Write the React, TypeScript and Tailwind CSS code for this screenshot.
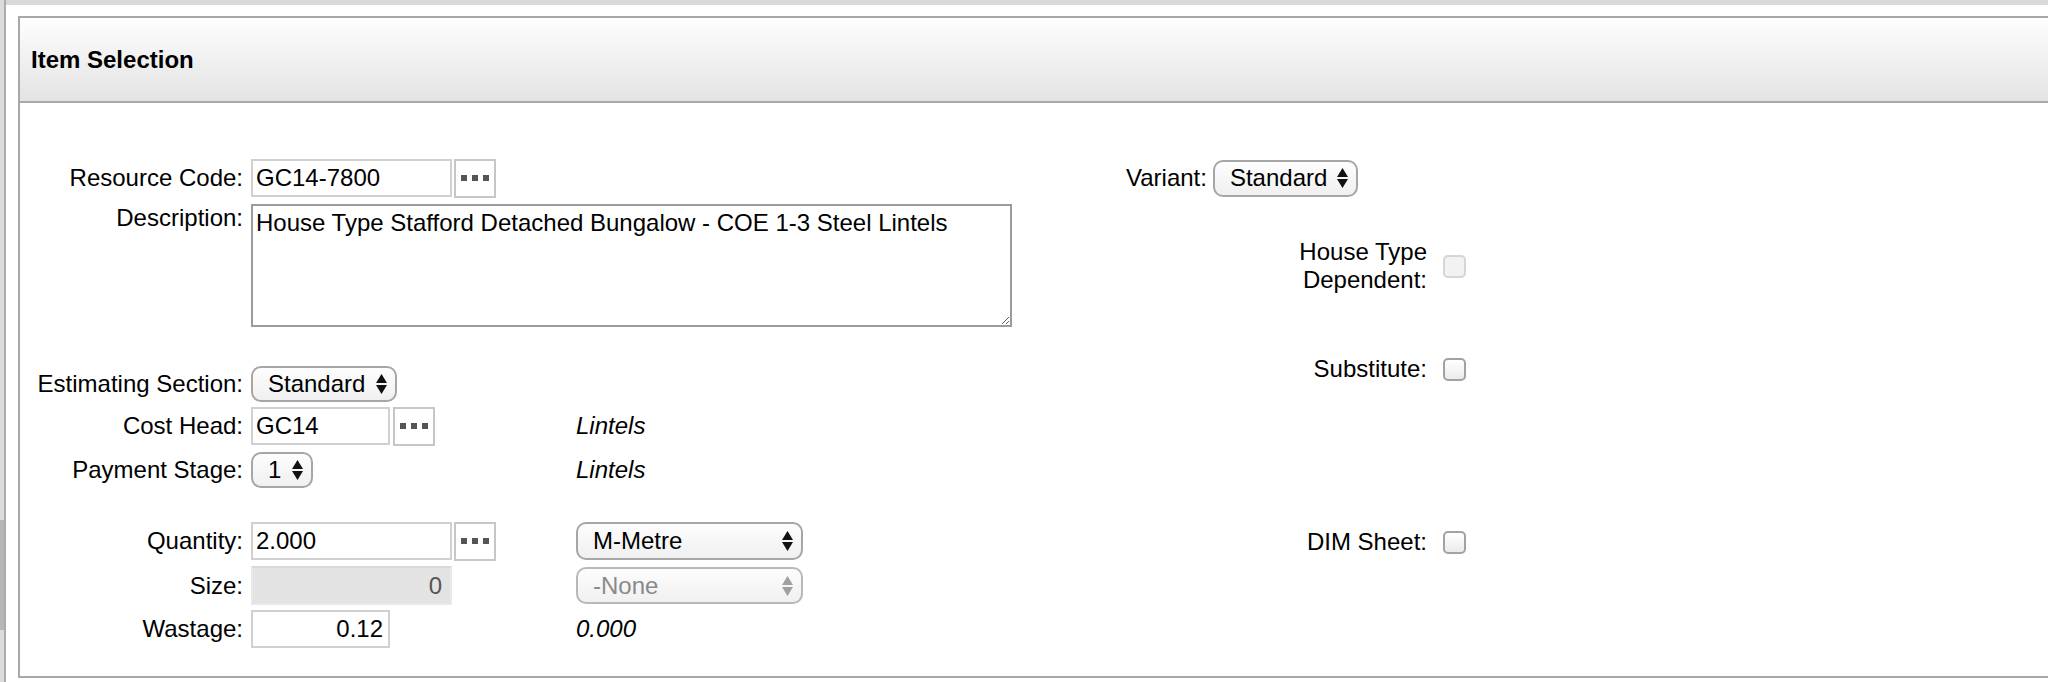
import React from "react";

function Arrows({ muted = false }: { muted?: boolean }) {
    const c = muted ? "#a0a0a0" : "#111111";
    return (
        <svg width="11" height="20" viewBox="0 0 11 20" className="shrink-0">
            <path d="M5.5 0 L11 9 L0 9 Z" fill={c} />
            <path d="M0 11 L11 11 L5.5 20 Z" fill={c} />
        </svg>
    );
}

function Select({ value, className = "", muted = false }: { value: string; className?: string; muted?: boolean }) {
    return (
        <div
            className={`flex shrink-0 items-center justify-between rounded-[10px] border-2 bg-linear-to-b from-[#fdfdfd] to-[#f0f0f0] pl-[15px] pr-[8px] ${
                muted ? "border-[#b8b8b8] text-[#8a8a8a]" : "border-[#a6a6a6] text-black"
            } ${className}`}
        >
            <span>{value}</span>
            <Arrows muted={muted} />
        </div>
    );
}

function Dots({ className = "" }: { className?: string }) {
    return (
        <div className={`flex h-[39px] w-[42px] shrink-0 items-center justify-center gap-[5px] border-2 border-[#c6c6c6] bg-white ${className}`}>
            <span className="h-[6px] w-[6px] bg-[#555]" />
            <span className="h-[6px] w-[6px] bg-[#555]" />
            <span className="h-[6px] w-[6px] bg-[#555]" />
        </div>
    );
}

function Check({ disabled = false }: { disabled?: boolean }) {
    return (
        <span
            className={`ml-4 block h-[23px] w-[23px] shrink-0 rounded-[5px] border-2 ${
                disabled ? "border-[#d6d6d6] bg-[#f2f2f2]" : "border-[#a2a2a2] bg-linear-to-b from-white to-[#ebebeb]"
            }`}
        />
    );
}

function Label({ children, className = "" }: { children: React.ReactNode; className?: string }) {
    return <div className={`w-[223px] shrink-0 text-right leading-[28px] ${className}`}>{children}</div>;
}

export default function App() {
    return (
        <div className="flex h-[682px] w-[2048px] overflow-hidden bg-white text-[24px] text-black font-['Liberation_Sans',Arial,Helvetica,sans-serif]">
            {/* left scroll strip */}
            <div className="flex w-[4px] shrink-0 flex-col bg-[#dcdcdc]">
                <div className="mt-[520px] h-[110px] bg-[#b6b6b6]" />
            </div>
            <div className="w-[2px] shrink-0 bg-[#acacac]" />

            <div className="flex min-w-0 flex-1 flex-col">
                <div className="h-[5px] shrink-0 bg-[#d9d9d9]" />
                <div className="pl-[12px] pt-[11px]">
                    <div className="border-y-2 border-l-2 border-[#a8a8a8]">
                        <div className="flex h-[85px] items-center border-b-2 border-[#a8a8a8] bg-linear-to-b from-[#fefefe] to-[#e3e3e3] pl-[11px]">
                            <h3 className="font-bold">Item Selection</h3>
                        </div>

                        <div className="flex">
                            {/* left table */}
                            <div className="w-[1080px] shrink-0 pt-[56px] pb-[28px]">
                                <div className="flex h-[38px] items-center">
                                    <Label>Resource Code:</Label>
                                    <input readOnly value="GC14-7800" className="ml-2 h-[38px] w-[201px] border-2 border-[#d0d0d0] px-[3px] outline-none" />
                                    <Dots className="ml-[2px]" />
                                </div>

                                <div className="mt-[7px] flex h-[123px] items-start">
                                    <Label>Description:</Label>
                                    <textarea
                                        readOnly
                                        value="House Type Stafford Detached Bungalow - COE 1-3 Steel Lintels"
                                        className="ml-2 h-[123px] w-[761px] resize-y border-2 border-[#9b9b9b] px-[3px] pt-[3px] leading-[28px] outline-none"
                                    />
                                </div>

                                <div className="mt-[39px] flex h-[36px] items-center">
                                    <Label>Estimating Section:</Label>
                                    <Select value="Standard" className="ml-2 h-[36px] w-[146px]" />
                                </div>

                                <div className="mt-[5px] flex h-[38px] items-center">
                                    <Label>Cost Head:</Label>
                                    <div className="ml-2 flex w-[325px] shrink-0 items-center">
                                        <input readOnly value="GC14" className="h-[38px] w-[139px] border-2 border-[#d0d0d0] px-[3px] outline-none" />
                                        <Dots className="ml-[3px]" />
                                    </div>
                                    <span className="italic">Lintels</span>
                                </div>

                                <div className="mt-[6px] flex h-[37px] items-center">
                                    <Label>Payment Stage:</Label>
                                    <div className="ml-2 flex w-[325px] shrink-0 items-center">
                                        <Select value="1" className="h-[36px] w-[62px]" />
                                    </div>
                                    <span className="italic">Lintels</span>
                                </div>

                                <div className="mt-[34px] flex h-[38px] items-center">
                                    <Label>Quantity:</Label>
                                    <div className="ml-2 flex w-[325px] shrink-0 items-center">
                                        <input readOnly value="2.000" className="h-[38px] w-[201px] border-2 border-[#d0d0d0] px-[3px] outline-none" />
                                        <Dots className="ml-[2px]" />
                                    </div>
                                    <Select value="M-Metre" className="h-[38px] w-[227px]" />
                                </div>

                                <div className="mt-[6px] flex h-[39px] items-center">
                                    <Label>Size:</Label>
                                    <div className="ml-2 flex w-[325px] shrink-0 items-center">
                                        <input
                                            readOnly
                                            value="0"
                                            className="h-[39px] w-[201px] border-2 border-[#e9e9e9] border-t-[#d9d9d9] bg-[#e3e3e3] pr-[8px] text-right text-[#555] outline-none"
                                        />
                                    </div>
                                    <Select value="-None" muted className="h-[37px] w-[227px]" />
                                </div>

                                <div className="mt-[5px] flex h-[38px] items-center">
                                    <Label>Wastage:</Label>
                                    <div className="ml-2 flex w-[325px] shrink-0 items-center">
                                        <input readOnly value="0.12" className="h-[38px] w-[139px] border-2 border-[#d0d0d0] pr-[5px] text-right outline-none" />
                                    </div>
                                    <span className="italic">0.000</span>
                                </div>
                            </div>

                            {/* right table */}
                            <div className="pt-[56px]">
                                <div className="flex h-[38px] items-center pl-[26px]">
                                    <span>Variant:</span>
                                    <Select value="Standard" className="ml-[6px] h-[37px] w-[145px]" />
                                </div>

                                <div className="mt-[41px] flex items-center">
                                    <div className="w-[327px] text-right leading-[28px]">
                                        House Type
                                        <br />
                                        Dependent:
                                    </div>
                                    <Check disabled />
                                </div>

                                <div className="mt-[61px] flex h-[28px] items-center">
                                    <div className="w-[327px] text-right leading-[28px]">Substitute:</div>
                                    <Check />
                                </div>

                                <div className="mt-[145px] flex h-[28px] items-center">
                                    <div className="w-[327px] text-right leading-[28px]">DIM Sheet:</div>
                                    <Check />
                                </div>
                            </div>
                        </div>
                    </div>
                </div>
            </div>
        </div>
    );
}
